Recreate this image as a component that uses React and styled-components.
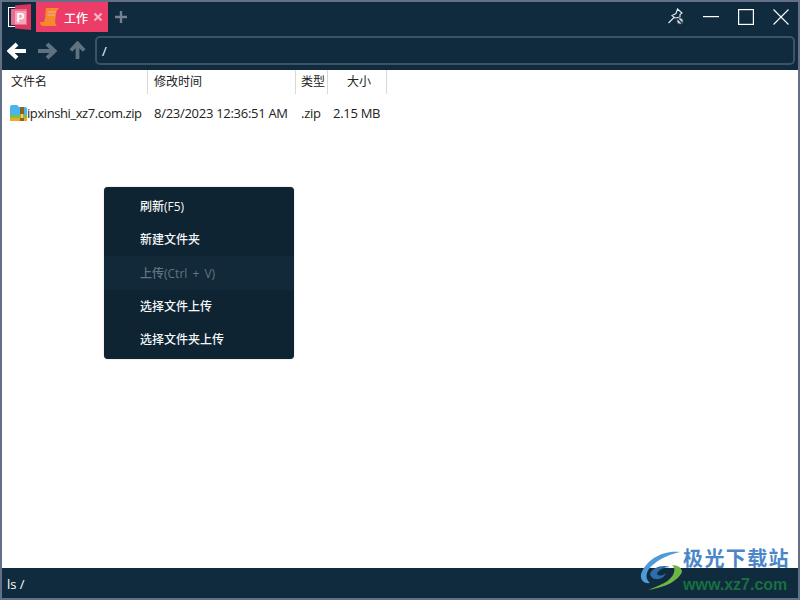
import React from 'react';
import styled, { createGlobalStyle } from 'styled-components';

const Global = createGlobalStyle`
  html, body { margin: 0; padding: 0; background: #fff; }
  body { font-family: "Open Sans", "Noto Sans CJK SC", sans-serif; }
  * { box-sizing: border-box; }
`;
const Win = styled.div`
  position: relative; width: 800px; height: 600px; border: 2px solid #646f88;
  display: flex; flex-direction: column; background: #fff; overflow: hidden;
`;
const TitleBar = styled.div`
  height: 30px; background: #102a3e; display: flex; align-items: stretch; flex: none;
`;
const Logo = styled.div`
  width: 34px; display: flex; align-items: center; justify-content: center; flex: none;
`;
const Tab = styled.div`
  width: 72px; background: #ec3d68; display: flex; align-items: center; padding-left: 4px; color: #fff;
  font-size: 12px; font-weight: 500; flex: none; font-family: "Noto Sans CJK SC", sans-serif;
`;
const TabLabel = styled.span` margin-left: 4px; width: 29px; white-space: nowrap; flex: none; `;
const Plus = styled.div` width: 26px; display: flex; align-items: center; justify-content: center; flex: none; `;
const Spacer = styled.div` flex: 1; `;
const WinBtns = styled.div` display: flex; align-items: center; gap: 15px; padding-right: 7px; `;
const WinBtn = styled.div` width: 20px; height: 20px; display: flex; align-items: center; justify-content: center; `;
const NavBar = styled.div`
  height: 38px; background: #102a3e; display: flex; align-items: center; flex: none; padding: 0 3px 1px 0;
`;
const NavBtn = styled.div` width: 30px; display: flex; align-items: center; justify-content: center; flex: none; `;
const Address = styled.div`
  flex: 1; margin-left: 3px; height: 29px; border: 2px solid #3c5364; border-radius: 5px; color: #fff; font-size: 13px;
  display: flex; align-items: center; padding-left: 5px;
`;
const Header = styled.div` display: grid; grid-template-columns: 146px 148px 32px 59px; height: 24px; flex: none; `;
const HeadCell = styled.div`
  border-right: 1px solid #d9d9d9; font-size: 12px; color: #222; padding-left: ${p => p.$pl}px; line-height: 22px;
  height: 24px; font-family: "Noto Sans CJK SC", sans-serif;
`;
const Row = styled.div`
  display: grid; grid-template-columns: 146px 148px 32px 59px; height: 37px; align-items: center; flex: none; font-size: 13px;
  color: #222; letter-spacing: -0.28px;
`;
const NameCell = styled.div` display: flex; align-items: center; padding-left: 8px; white-space: nowrap; letter-spacing: -0.42px; `;
const Cell = styled.div` padding-left: ${p => p.$pl}px; white-space: nowrap; `;
const Main = styled.div` flex: 1; `;
const Status = styled.div`
  height: 30px; background: #102a3e; color: #fff; font-size: 13px; display: flex; align-items: center; padding: 2px 0 0 5px; flex: none;
`;
const Menu = styled.div`
  position: absolute; left: 102px; top: 185px; width: 190px; height: 172px; background: #0e2433; border-radius: 4px;
  padding: 3px 0; box-shadow: 0 0 1px rgba(14,36,51,.6);
`;
const MenuItem = styled.div`
  height: ${p => p.$h || 33}px; display: flex; align-items: center; padding: 0 0 1px 36px; font-size: 12px; font-weight: 500;
  word-spacing: 2px; color: ${p => p.$off ? '#647480' : '#f7f8f9'};
  background: ${p => p.$off ? '#12293a' : 'transparent'};
`;
const Mark = styled.div`
  position: absolute; right: 8px; bottom: 4px; width: 160px; height: 48px;
`;
const MarkTitle = styled.div`
  position: absolute; left: 53px; top: 0; font-size: 20px; font-weight: 700; color: #4a87c9; letter-spacing: 1.4px; white-space: nowrap;
  font-family: "Noto Sans CJK SC", sans-serif; line-height: 24px;
`;
const MarkUrl = styled.div`
  position: absolute; left: 53px; top: 29px; font-size: 16px; font-weight: 700; color: #17703f; white-space: nowrap; line-height: 20px;
  font-family: "Liberation Sans", sans-serif;
`;

const PptIcon = () => (
  <svg width="26" height="26" viewBox="0 0 26 26">
    <rect x="2.500" y="3.500" width="18" height="19" fill="none" stroke="#fff" strokeWidth="1" />
    <path d="M9 1.500 L25 0 V26 L9 24.500Z" fill="#d8355f" />
    <path d="M5 5 H21 V21 H5Z" fill="#ea6d8f" />
    <rect x="9" y="7" width="11" height="13" fill="#f4a6b8" />
    <text x="10.500" y="18" fontSize="12" fontWeight="700" fontFamily="Liberation Sans" fill="#fff">P</text>
  </svg>
);
const ScrollIcon = () => (
  <svg width="20" height="20" viewBox="0 0 20 20">
    <path d="M6 1 H19 Q16.500 3 16 7 L15 15 H4 Q6 10 5.500 5 Z" fill="#f58a2c" />
    <path d="M0 15 H15 Q15.500 18 17 19 H3 Q0.500 19 0 15Z" fill="#f58a2c" />
    <path d="M8 5 H16 M7.500 8 H15" stroke="#f5a9b5" strokeWidth="1" />
  </svg>
);
const ZipIcon = () => (
  <svg width="17" height="16" viewBox="0 0 17 16" style={{ flex: 'none' }}>
    <path d="M0 2 Q0 0 2 0 H7 L9 2 H15 Q17 2 17 4 V10 H0Z" fill="#49b5ee" />
    <rect x="0" y="10" width="17" height="3" fill="#7cc243" />
    <rect x="0" y="13" width="17" height="3" fill="#f4a81d" />
    <rect x="10" y="2" width="4" height="14" fill="#8a6420" />
    <rect x="10.500" y="9" width="3" height="4" fill="#f7d060" />
  </svg>
);
const X = () => (
  <svg width="10" height="10" viewBox="0 0 10 10" style={{ flex: 'none' }}><path d="M1.500 1.500 L8.500 8.500 M8.500 1.500 L1.500 8.500" stroke="#f7b6c6" strokeWidth="2" /></svg>
);
const PlusIcon = () => (
  <svg width="14" height="14" viewBox="0 0 14 14"><path d="M7 1 V13 M1 7 H13" stroke="#76838f" strokeWidth="2.400" /></svg>
);
const Pin = () => (
  <svg width="18" height="18" viewBox="0 0 18 18" fill="none" stroke="#e6eaee" strokeWidth="1.100">
    <path d="M10.500 1 L15 5 L13 6.500 L13 9 L8 10 L5 7.500 L9 5.500 Z" />
    <path d="M7 9.500 L1.500 15" />
    <circle cx="13" cy="13" r="3.200" fill="#cfd5da" stroke="#102a3e" strokeWidth=".8" />
    <path d="M11 11 L15 15" stroke="#102a3e" strokeWidth="1.100" />
  </svg>
);
const Arrow = ({ dir, color, size }) => {
  const r = { left: 180, right: 0, up: -90 }[dir];
  return (
    <svg width={size} height={size} viewBox="0 0 20 20" style={{ transform: `rotate(${r}deg)` }}>
      <path d="M1 10 H17 M10 3 L17.500 10 L10 17" fill="none" stroke={color} strokeWidth="4" />
    </svg>
  );
};
const Swoosh = () => (
  <svg width="46" height="42" viewBox="0 0 46 42" style={{ position: 'absolute', left: 10, top: 4 }}>
    <path d="M40 2 C22 0 6 10 1 24 C0 30 4 34 10 33 C4 28 6 20 14 14 C22 7 32 4 40 2Z" fill="#4f9ad8" />
    <path d="M10 24 C12 18 22 14 30 17 C24 17 18 20 17 24 C20 27 24 25 26 23 C24 30 12 32 10 24Z" fill="#2d6da8" />
    <path d="M8 40 C20 38 36 34 42 22 C42 18 38 15 32 15 C38 20 32 30 22 34 C16 37 12 38 8 40Z" fill="#6fb544" />
  </svg>
);

export default function App() {
  return (
    <>
      <Global />
      <Win>
        <TitleBar>
          <Logo><PptIcon /></Logo>
          <Tab>
            <ScrollIcon />
            <TabLabel>工作</TabLabel>
            <X />
          </Tab>
          <Plus><PlusIcon /></Plus>
          <Spacer />
          <WinBtns>
            <WinBtn><Pin /></WinBtn>
            <WinBtn><svg width="16" height="2" viewBox="0 0 16 2"><rect width="16" height="1.200" fill="#fff" /></svg></WinBtn>
            <WinBtn><svg width="16" height="16" viewBox="0 0 16 16"><rect x=".6" y=".6" width="14.800" height="14.800" fill="none" stroke="#fff" strokeWidth="1.200" /></svg></WinBtn>
            <WinBtn><svg width="16" height="16" viewBox="0 0 16 16"><path d="M.5 .5 L15.500 15.500 M15.500 .5 L.5 15.500" stroke="#fff" strokeWidth="1.100" /></svg></WinBtn>
          </WinBtns>
        </TitleBar>
        <NavBar>
          <NavBtn><Arrow dir="left" color="#ffffff" size={20} /></NavBtn>
          <NavBtn><Arrow dir="right" color="#5f7280" size={20} /></NavBtn>
          <NavBtn><Arrow dir="up" color="#5f7280" size={19} /></NavBtn>
          <Address>/</Address>
        </NavBar>
        <Header>
          <HeadCell $pl={9}>文件名</HeadCell>
          <HeadCell $pl={6}>修改时间</HeadCell>
          <HeadCell $pl={5}>类型</HeadCell>
          <HeadCell $pl={19}>大小</HeadCell>
        </Header>
        <Row>
          <NameCell><ZipIcon />ipxinshi_xz7.com.zip</NameCell>
          <Cell $pl={6}>8/23/2023 12:36:51 AM</Cell>
          <Cell $pl={5}>.zip</Cell>
          <Cell $pl={5}>2.15 MB</Cell>
        </Row>
        <Main />
        <Status>ls /</Status>
        <Menu>
          <MenuItem>刷新(F5)</MenuItem>
          <MenuItem>新建文件夹</MenuItem>
          <MenuItem $off $h={34}>上传(Ctrl + V)</MenuItem>
          <MenuItem>选择文件上传</MenuItem>
          <MenuItem>选择文件夹上传</MenuItem>
        </Menu>
        <Mark>
          <Swoosh />
          <MarkTitle>极光下载站</MarkTitle>
          <MarkUrl>www.xz7.com</MarkUrl>
        </Mark>
      </Win>
    </>
  );
}
